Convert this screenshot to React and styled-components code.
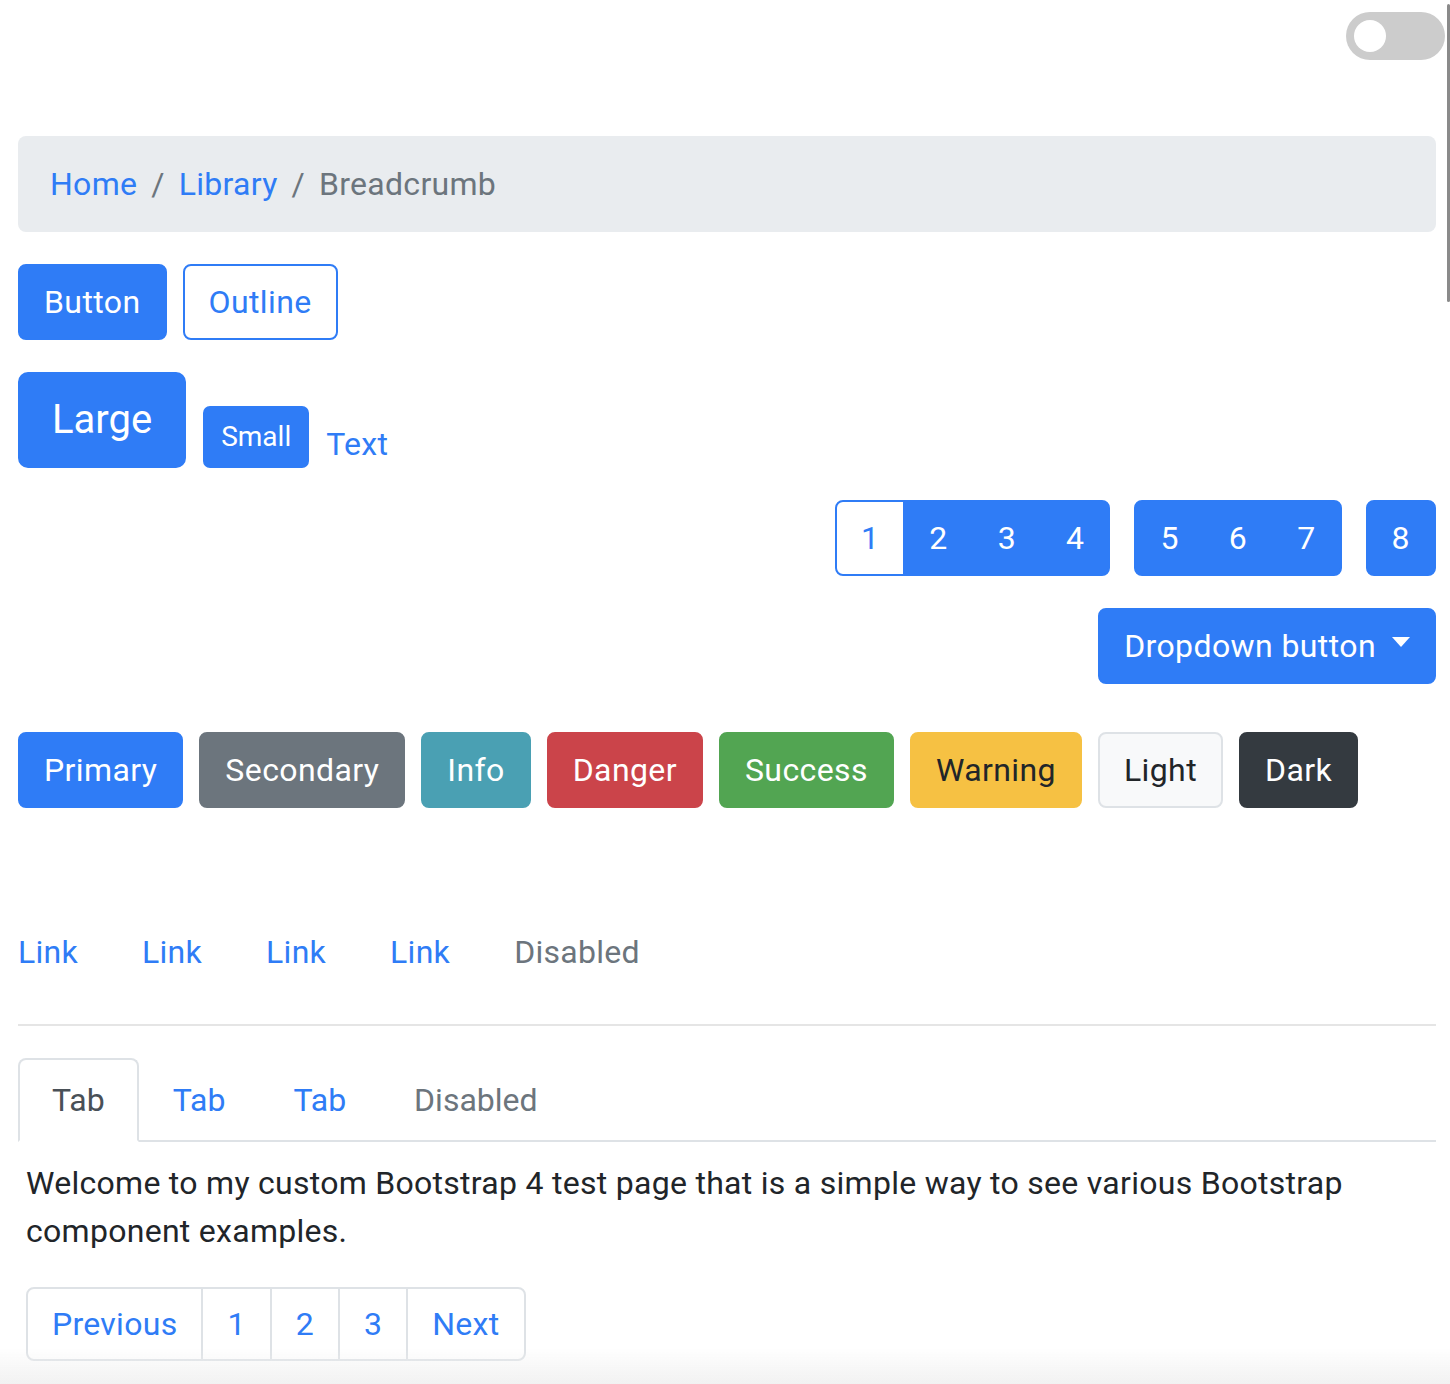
import React from "react";
import styled, { createGlobalStyle, css } from "styled-components";

const GlobalStyle = createGlobalStyle`
  html, body {
    margin: 0;
    padding: 0;
    background: #fff;
  }
  body {
    font-family: Roboto, "Liberation Sans", Arial, sans-serif;
    font-size: 32px;
    line-height: 48px;
    letter-spacing: 0.28px;
    color: #212529;
  }
  * {
    box-sizing: border-box;
  }
`;

const colors = {
  primary: { bg: "#2f7cf6", fg: "#fff", border: "#2f7cf6" },
  secondary: { bg: "#6c757d", fg: "#fff", border: "#6c757d" },
  info: { bg: "#4aa0b3", fg: "#fff", border: "#4aa0b3" },
  danger: { bg: "#cb444a", fg: "#fff", border: "#cb444a" },
  success: { bg: "#52a552", fg: "#fff", border: "#52a552" },
  warning: { bg: "#f6c143", fg: "#212529", border: "#f6c143" },
  light: { bg: "#f8f9fa", fg: "#212529", border: "#dee2e6" },
  dark: { bg: "#343a40", fg: "#fff", border: "#343a40" },
  outline: { bg: "#fff", fg: "#2f7cf6", border: "#2f7cf6" },
};

const sizes = {
  md: css`
    padding: 12px 24px;
    font-size: 32px;
    line-height: 48px;
    border-radius: 8px;
    letter-spacing: 0.4px;
  `,
  lg: css`
    padding: 16px 32px;
    font-size: 40px;
    line-height: 60px;
    border-radius: 10px;
    letter-spacing: 0;
  `,
  sm: css`
    padding: 8px 16px;
    font-size: 28px;
    line-height: 42px;
    border-radius: 7px;
    letter-spacing: 0;
  `,
};

const Page = styled.div`
  padding: 12px 14px 40px 18px;
  position: relative;
`;

const TopBar = styled.div`
  display: flex;
  justify-content: flex-end;
  margin-right: -9px;
`;

const Toggle = styled.div`
  width: 99px;
  height: 48px;
  border-radius: 24px;
  background: #cccccc;
  padding: 8px;
  display: flex;
  align-items: center;
`;

const Knob = styled.span`
  width: 32px;
  height: 32px;
  border-radius: 50%;
  background: #fff;
`;

const Breadcrumb = styled.nav`
  margin-top: 76px;
  background: #e9ecef;
  border-radius: 8px;
  padding: 24px 32px;
  display: flex;
  align-items: center;
  color: #6c757d;
`;

const Crumb = styled.a`
  color: #2f7cf6;
  text-decoration: none;
`;

const Sep = styled.span`
  padding: 0 14px;
  color: #6c757d;
`;

const Row = styled.div`
  display: flex;
  align-items: ${({ $align }) => $align || "center"};
  justify-content: ${({ $justify }) => $justify || "flex-start"};
  gap: ${({ $gap }) => $gap || 16}px;
  margin-top: ${({ $top }) => $top || 0}px;
`;

const Button = styled.button`
  font-family: inherit;
  font-weight: 400;
  border: 2px solid ${({ $variant }) => colors[$variant || "primary"].border};
  background: ${({ $variant }) => colors[$variant || "primary"].bg};
  color: ${({ $variant }) => colors[$variant || "primary"].fg};
  ${({ $size }) => sizes[$size || "md"]};
  display: inline-flex;
  align-items: center;
  cursor: pointer;
  white-space: nowrap;
`;

const TextLink = styled.a`
  color: #2f7cf6;
  text-decoration: none;
  font-size: 32px;
  line-height: 48px;
`;

const Group = styled.div`
  display: inline-flex;
  ${Button} {
    border-radius: 0;
    min-width: 70px;
    justify-content: center;
  }
  ${Button}:not(:first-child) {
    margin-left: -2px;
  }
  ${Button}:first-child {
    border-radius: 8px 0 0 8px;
  }
  ${Button}:last-child {
    border-radius: 0 8px 8px 0;
  }
  ${Button}:only-child {
    border-radius: 8px;
  }
`;

const Caret = styled.span`
  display: inline-block;
  margin-left: 16px;
  width: 0;
  height: 0;
  border-top: 10px solid currentColor;
  border-left: 9px solid transparent;
  border-right: 9px solid transparent;
  transform: translateY(-4px);
`;

const Nav = styled.nav`
  display: flex;
  gap: 64px;
  margin-top: 104px;
`;

const NavLink = styled.a`
  padding: 16px 0;
  color: ${({ $disabled }) => ($disabled ? "#6c757d" : "#2f7cf6")};
  text-decoration: none;
`;

const Rule = styled.hr`
  margin: 32px 0;
  border: 0;
  border-top: 2px solid rgba(0, 0, 0, 0.1);
`;

const Tabs = styled.div`
  display: flex;
  border-bottom: 2px solid #dee2e6;
`;

const Tab = styled.a`
  padding: 16px 32px;
  margin-bottom: -2px;
  border: 2px solid transparent;
  border-radius: 8px 8px 0 0;
  text-decoration: none;
  letter-spacing: 0;
  color: ${({ $active, $disabled }) =>
    $active ? "#495057" : $disabled ? "#6c757d" : "#2f7cf6"};
  ${({ $active }) =>
    $active &&
    css`
      background: #fff;
      border-color: #dee2e6 #dee2e6 #fff;
    `}
`;

const TabContent = styled.div`
  padding: 17px 8px 0;
`;

const Lead = styled.p`
  margin: 0 0 32px;
  color: #212529;
`;

const Pagination = styled.ul`
  display: flex;
  list-style: none;
  padding: 0;
  margin: 0;
`;

const PageLink = styled.li`
  padding: 15px 24px;
  line-height: 40px;
  border: 2px solid #dee2e6;
  color: #2f7cf6;
  background: #fff;
  & + & {
    margin-left: -2px;
  }
  &:first-child {
    border-radius: 8px 0 0 8px;
  }
  &:last-child {
    border-radius: 0 8px 8px 0;
  }
`;

const ScrollThumb = styled.div`
  position: fixed;
  top: 4px;
  right: 0;
  width: 3px;
  height: 298px;
  border-radius: 2px;
  background: #8a8a8a;
`;

const BottomFade = styled.div`
  position: fixed;
  left: 0;
  right: 0;
  bottom: 0;
  height: 36px;
  pointer-events: none;
  background: linear-gradient(to bottom, rgba(240, 240, 240, 0), rgba(240, 240, 240, 0.9));
`;

const variants = [
  ["primary", "Primary"],
  ["secondary", "Secondary"],
  ["info", "Info"],
  ["danger", "Danger"],
  ["success", "Success"],
  ["warning", "Warning"],
  ["light", "Light"],
  ["dark", "Dark"],
];

export default function App() {
  return (
    <>
      <GlobalStyle />
      <Page>
        <TopBar>
          <Toggle>
            <Knob />
          </Toggle>
        </TopBar>

        <Breadcrumb>
          <Crumb href="#">Home</Crumb>
          <Sep>/</Sep>
          <Crumb href="#">Library</Crumb>
          <Sep>/</Sep>
          <span>Breadcrumb</span>
        </Breadcrumb>

        <Row $top={32}>
          <Button>Button</Button>
          <Button $variant="outline">Outline</Button>
        </Row>

        <Row $top={32} $align="flex-end" $gap={17}>
          <Button $size="lg">Large</Button>
          <Button $size="sm">Small</Button>
          <TextLink href="#">Text</TextLink>
        </Row>

        <Row $top={32} $justify="flex-end" $gap={24}>
          <Group>
            <Button $variant="outline">1</Button>
            <Button>2</Button>
            <Button>3</Button>
            <Button>4</Button>
          </Group>
          <Group>
            <Button>5</Button>
            <Button>6</Button>
            <Button>7</Button>
          </Group>
          <Group>
            <Button>8</Button>
          </Group>
        </Row>

        <Row $top={32} $justify="flex-end">
          <Button>
            Dropdown button
            <Caret />
          </Button>
        </Row>

        <Row $top={48} $gap={16}>
          {variants.map(([v, label]) => (
            <Button key={v} $variant={v}>
              {label}
            </Button>
          ))}
        </Row>

        <Nav>
          <NavLink href="#">Link</NavLink>
          <NavLink href="#">Link</NavLink>
          <NavLink href="#">Link</NavLink>
          <NavLink href="#">Link</NavLink>
          <NavLink $disabled>Disabled</NavLink>
        </Nav>

        <Rule />

        <Tabs>
          <Tab $active>Tab</Tab>
          <Tab href="#">Tab</Tab>
          <Tab href="#">Tab</Tab>
          <Tab $disabled>Disabled</Tab>
        </Tabs>

        <TabContent>
          <Lead>
            Welcome to my custom Bootstrap 4 test page that is a simple way to
            see various Bootstrap component examples.
          </Lead>
          <Pagination>
            <PageLink>Previous</PageLink>
            <PageLink>1</PageLink>
            <PageLink>2</PageLink>
            <PageLink>3</PageLink>
            <PageLink>Next</PageLink>
          </Pagination>
        </TabContent>
      </Page>
      <ScrollThumb />
      <BottomFade />
    </>
  );
}
